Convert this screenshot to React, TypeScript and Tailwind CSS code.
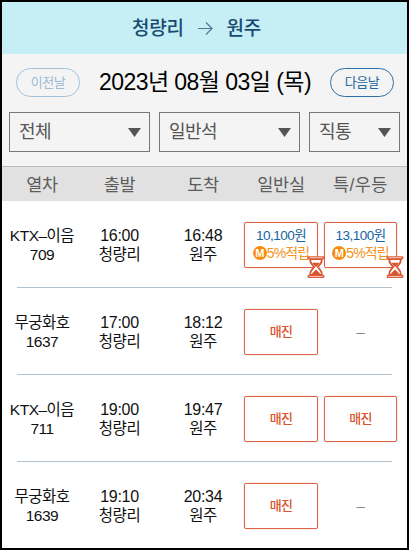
import clsx from "clsx";

type Seat = { kind: "price"; price: string } | { kind: "soldout" } | { kind: "none" };

type Train = {
    name: string;
    no: string;
    depart: string;
    arrive: string;
    general: Seat;
    special: Seat;
};

const trains: Train[] = [
    { name: "KTX–이음", no: "709", depart: "16:00", arrive: "16:48", general: { kind: "price", price: "10,100원" }, special: { kind: "price", price: "13,100원" } },
    { name: "무궁화호", no: "1637", depart: "17:00", arrive: "18:12", general: { kind: "soldout" }, special: { kind: "none" } },
    { name: "KTX–이음", no: "711", depart: "19:00", arrive: "19:47", general: { kind: "soldout" }, special: { kind: "soldout" } },
    { name: "무궁화호", no: "1639", depart: "19:10", arrive: "20:34", general: { kind: "soldout" }, special: { kind: "none" } },
];

const Hourglass = () => (
    <svg viewBox="0 0 18 24" className="absolute -right-[8px] -bottom-[12px] h-6 w-[18px]" fill="none">
        <path d="M3 4C3 8.500 5 9.500 7.200 12C5 14.500 3 15.500 3 20H15C15 15.500 13 14.500 10.800 12C13 9.500 15 8.500 15 4Z" fill="#fff" stroke="#d9532f" strokeWidth="1.800" />
        <path d="M5.500 7.800H12.500C11.800 9.500 10.500 10.500 9 12C7.500 10.500 6.200 9.500 5.500 7.800Z" fill="#d9532f" />
        <path d="M9 14.500L13 18.500V20H5V18.500Z" fill="#d9532f" />
        <rect x="0.600" y="1.200" width="16.800" height="3" rx="0.800" fill="#e0603d" />
        <rect x="0.600" y="20" width="16.800" height="3" rx="0.800" fill="#e0603d" />
        <path d="M2.500 2.700H15.500M2.500 21.500H15.500" stroke="#f9dcd3" strokeWidth="0.800" />
    </svg>
);

const SeatCell = ({ seat }: { seat: Seat }) => {
    if (seat.kind === "none") {
        return <div className="flex h-[46px] items-center justify-center text-[15px] text-[#888]">–</div>;
    }
    if (seat.kind === "soldout") {
        return (
            <div className="flex h-[46px] items-center justify-center rounded-[2px] border border-[#dc6347] text-[13px] font-medium tracking-[-0.700px] text-[#d9532f] shadow-[0_0_1px_#df6f55]">
                매진
            </div>
        );
    }
    return (
        <div className="relative h-[46px] rounded-[2px] border border-[#dc6347] pt-[4px] text-center whitespace-nowrap shadow-[0_0_1px_#df6f55]">
            <div className="text-[13.500px] leading-[18px] tracking-[-0.500px] text-[#17639f]">{seat.price}</div>
            <div className="flex items-center justify-center text-[14px] leading-[17px] tracking-[-0.900px] text-[#f59322]">
                <span className="flex size-[14px] shrink-0 items-center justify-center rounded-full bg-[#f78d10] text-[11px] font-bold tracking-normal text-white">M</span>
                5%적립
            </div>
            <Hourglass />
        </div>
    );
};

const Select = ({ label, className }: { label: string; className: string }) => (
    <div className={clsx("flex h-10 items-center justify-between border border-[#777] pr-[8px] pl-[9px]", className)}>
        <span className="text-[18px] tracking-[-0.500px] text-[#555]">{label}</span>
        <svg viewBox="0 0 13 9" className="h-[9px] w-[13px]">
            <path d="M0 0H13L6.500 9Z" fill="#555" />
        </svg>
    </div>
);

const columns = "grid grid-cols-[75px_85px_82px_74px_73px] [&>*:nth-child(5)]:ml-[6px] [&>*:nth-child(5)]:-mr-[6px]";

export default function App() {
    return (
        <div className="flex h-[550px] w-[409px] flex-col overflow-hidden border-2 border-black bg-white font-['Liberation_Sans','Noto_Sans_CJK_KR',sans-serif]">
            <header className="flex h-[52px] shrink-0 items-center justify-center gap-[14px] bg-[#c5eff5] pr-[16px] text-[19px] font-medium tracking-[-0.300px] text-[#174b72]">
                <span className="pt-[3px]">청량리</span>
                <svg viewBox="0 0 15 13" className="h-[13px] w-[15px]" fill="none" stroke="#4c7a96" strokeWidth="1.200">
                    <path d="M0 6.500H14M8 0.500L14 6.500L8 12.500" />
                </svg>
                <span className="pt-[3px]">원주</span>
            </header>

            <div className="h-[112px] shrink-0 bg-[#f4f4f4]">
                <div className="flex h-[58px] items-center justify-between pb-px pr-[13px] pl-[14px] whitespace-nowrap">
                    <button className="h-[29px] w-16 rounded-full border border-[#9fc1dc] text-[13px] tracking-[-0.500px] text-[#9bbbd5]">이전날</button>
                    <h1 className="text-[23px] tracking-[-0.550px] text-black">2023년 08월 03일 (목)</h1>
                    <button className="h-[29px] w-16 rounded-full border border-[#2f6fa5] text-[13px] tracking-[-0.500px] text-[#2565a0]">다음날</button>
                </div>
                <div className="flex gap-[9px] pl-[7px]">
                    <Select label="전체" className="w-[141px]" />
                    <Select label="일반석" className="w-[141px]" />
                    <Select label="직통" className="w-[91px]" />
                </div>
            </div>

            <div className={clsx(columns, "h-[35px] shrink-0 items-center border-t border-[#bbb] bg-[#e1e1e1] pt-[3px] text-center text-[17.500px] tracking-[-0.300px] whitespace-nowrap text-[#5c5c5c]")}>
                <span className="pl-[5px]">열차</span>
                <span>출발</span>
                <span>도착</span>
                <span>일반실</span>
                <span className="tracking-[0.400px]">특/우등</span>
            </div>

            {trains.map((t, i) => (
                <div key={t.no} className="relative shrink-0">
                    <div className={clsx(columns, "h-[87px] items-center text-center text-[15.500px] leading-[19px] tracking-[-0.500px] whitespace-nowrap text-[#111]")}>
                        <div className="pl-[5px]">
                            <p>{t.name}</p>
                            <p>{t.no}</p>
                        </div>
                        <div>
                            <p className="text-[16px] tracking-[-0.300px]">{t.depart}</p>
                            <p>청량리</p>
                        </div>
                        <div>
                            <p className="text-[16px] tracking-[-0.300px]">{t.arrive}</p>
                            <p>원주</p>
                        </div>
                        <SeatCell seat={t.general} />
                        <SeatCell seat={t.special} />
                    </div>
                    {i < trains.length - 1 && <div className="absolute bottom-0 left-[15px] h-px w-[375px] bg-[#b4c3d0]" />}
                </div>
            ))}
        </div>
    );
}
